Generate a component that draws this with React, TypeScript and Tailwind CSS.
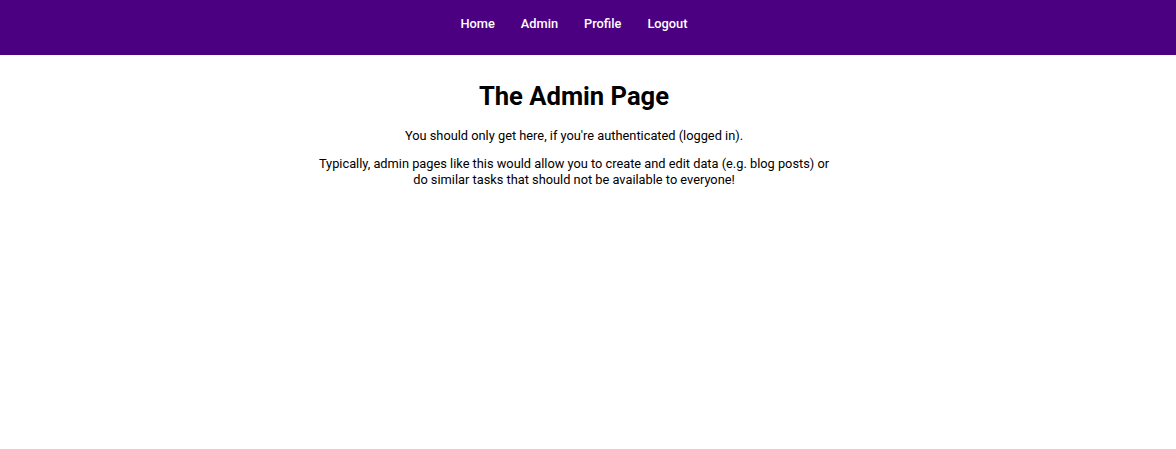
export default function App() {
  return (
    <div className="min-h-screen bg-white font-['Roboto',sans-serif] text-black">
      <header className="h-[55px] bg-[#4b0082] pr-[28px]">
        <nav className="flex h-full justify-center pt-[16px]">
          <ul className="flex gap-[26px] text-[12.8px] font-medium leading-[16px] text-white">
            <li>Home</li>
            <li>Admin</li>
            <li>Profile</li>
            <li>Logout</li>
          </ul>
        </nav>
      </header>
      <main className="pr-[28px] text-center">
        <h1 className="mt-[26px] text-[25.6px] font-bold leading-[30px]">The Admin Page</h1>
        <p className="mt-[17px] text-[12.8px] leading-[16px]">
          You should only get here, if you're authenticated (logged in).
        </p>
        <p className="mx-auto mt-[12px] max-w-[520px] text-[12.8px] leading-[16px]">
          Typically, admin pages like this would allow you to create and edit data (e.g. blog posts) or do similar
          tasks that should not be available to everyone!
        </p>
      </main>
    </div>
  );
}
